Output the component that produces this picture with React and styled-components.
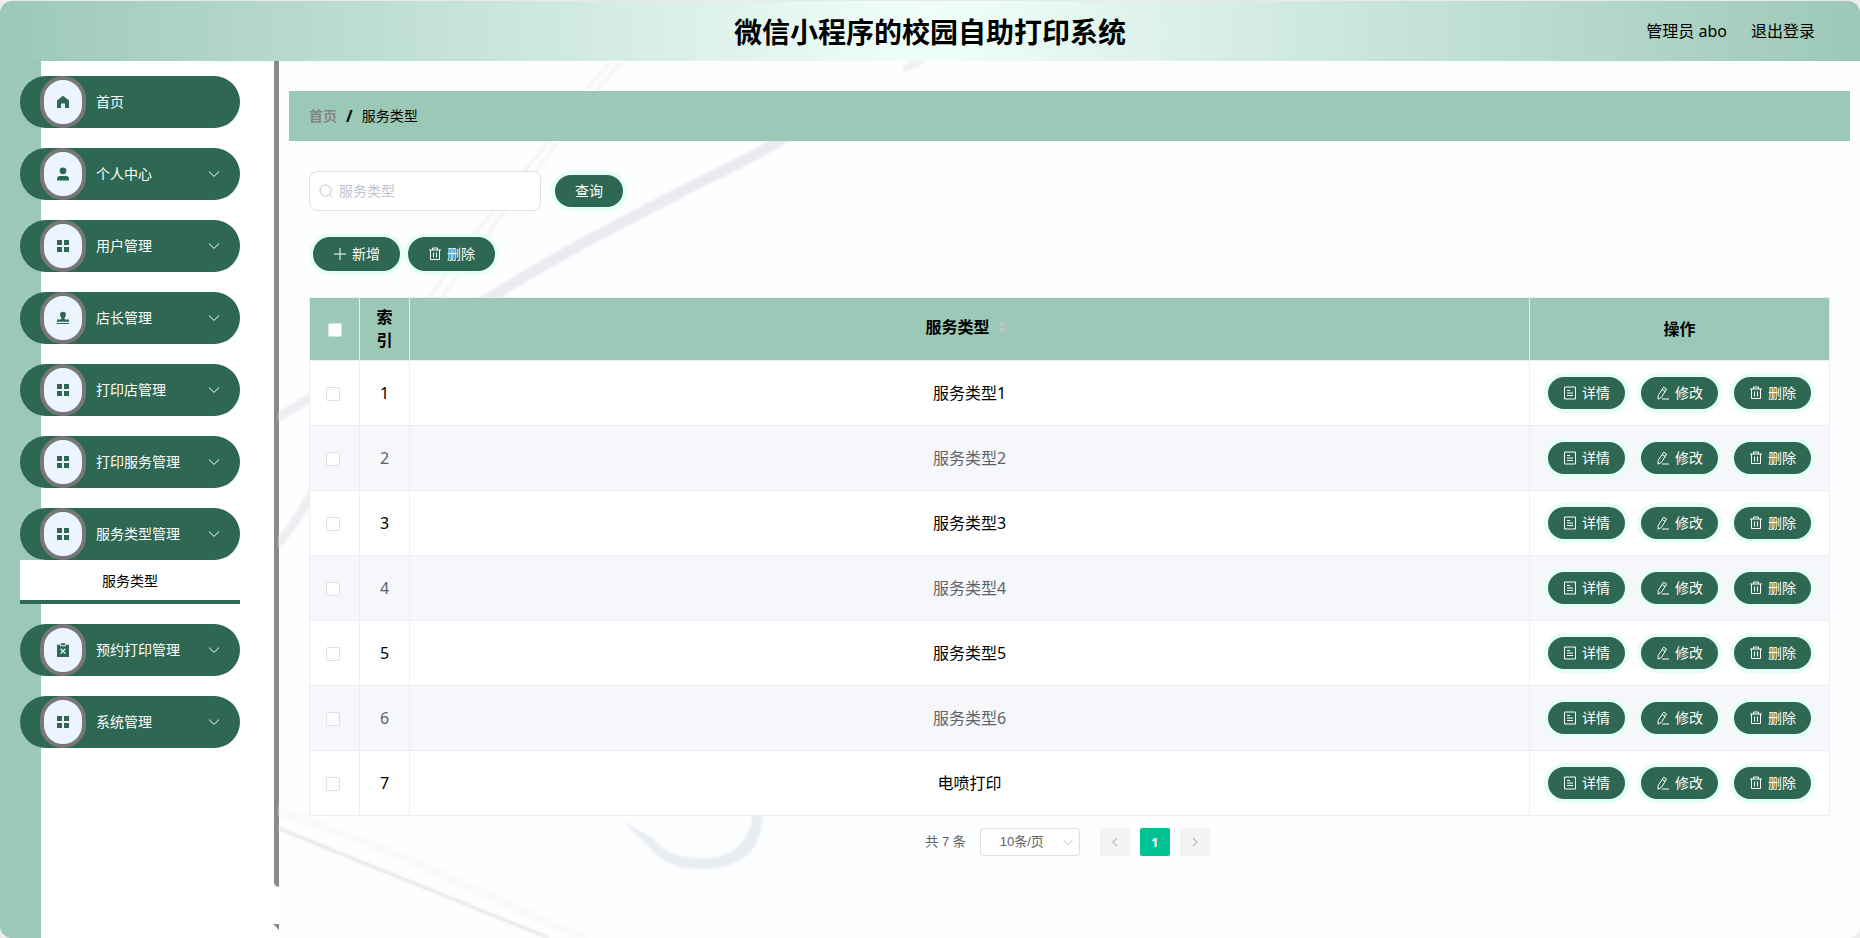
import React from 'react';
import styled, {createGlobalStyle} from 'styled-components';

const GlobalStyle = createGlobalStyle`
    :root{
        --green-dark: #2e6852;
        --green-light: #9cc8b7;
        --mint: #e6fef5;
        --border-color: #ebeef5;
        --input-border: #dcdfe6;
    }
    *{
        box-sizing: border-box;
        margin: 0;
        padding: 0;
    }
    body{
        background-color: #eeeeee;
        color: #000;
        font-family: 'Noto Sans', 'Noto Sans CJK SC', sans-serif;
        font-size: 14px;
        line-height: 20px;
    }
    a{
        color: inherit;
        text-decoration: none;
    }
    button, input, select{
        font-family: inherit;
        font-size: inherit;
        line-height: inherit;
    }
    button{
        border: none;
        cursor: pointer;
    }
`;

const Icon = ({size = 14, children}) => (
    <svg width={size} height={size} viewBox="0 0 14 14" fill="none" stroke="currentColor" strokeWidth="1" aria-hidden="true">
        {children}
    </svg>
)

const HomeIcon = () => (
    <Icon>
        <path d="M7 .8 1 5.6V13h4V8.6h4V13h4V5.6z" fill="currentColor" stroke="none" />
    </Icon>
)

const UserIcon = () => (
    <Icon>
        <g fill="currentColor" stroke="none">
            <circle cx="7" cy="3.8" r="3.4" />
            <path d="M1 13.6V12a3 3 0 0 1 3-3h6a3 3 0 0 1 3 3v1.6z" />
        </g>
    </Icon>
)

const MenuIcon = () => (
    <Icon>
        <path d="M1 1h5v5H1zM8 1h5v5H8zM1 8h5v5H1zM8 8h5v5H8z" fill="currentColor" stroke="none" />
    </Icon>
)

const StampIcon = () => (
    <Icon>
        <path d="M7 .8a3 3 0 0 1 3 3c0 1.600-1.400 2.400-1.400 3.800 0 .8.600 1 1.400 1h3v2.200H1V8.600h3c.8 0 1.400-.2 1.400-1C5.400 6.200 4 5.400 4 3.800a3 3 0 0 1 3-3zM1 12h12v1H1z" fill="currentColor" stroke="none" />
    </Icon>
)

const ClipboardIcon = () => (
    <Icon>
        <path d="M1 1.800h3v1.400h6V1.800h3V14H1zM4.800.2h4.400v2H4.800z" fill="currentColor" stroke="none" />
        <path d="m4.600 5.800 4.800 4.800m0-4.800-4.800 4.800" stroke="#ecf5ff" strokeWidth="1.300" />
    </Icon>
)

const ChevronIcon = () => (
    <Icon>
        <path d="m2 4.600 5 4.800 5-4.800" />
    </Icon>
)

const SearchIcon = () => (
    <Icon>
        <circle cx="6.600" cy="6.600" r="5.600" />
        <path d="m10.600 10.600 2.600 2.600" />
    </Icon>
)

const PlusIcon = () => (
    <Icon>
        <path d="M7 1v12M1 7h12" />
    </Icon>
)

const TrashIcon = () => (
    <Icon>
        <path d="M1 3h12M4.500 3V1h5v2M2.500 3v9.500h9V3M5.500 5.500v5M8.500 5.500v5" />
    </Icon>
)

const DetailIcon = () => (
    <Icon>
        <path d="M1.500 1h11v12h-11zM4 4.500h3M4 7h6M4 9.500h6" />
    </Icon>
)

const EditIcon = () => (
    <Icon>
        <path d="m7.600 1.200 3 1.800-5.200 8.400-3.400 1.800.200-3.800zM6.200 3.600l3 1.800M6 13h7" />
    </Icon>
)

const ArrowIcon = ({d}) => (
    <svg width="12" height="12" viewBox="0 0 12 12" fill="none" stroke="currentColor" strokeWidth="1.600" aria-hidden="true">
        <path d={d} />
    </svg>
)

const SortIcon = () => (
    <svg width="8" height="12" viewBox="0 0 8 12" fill="#c0c4cc" aria-hidden="true">
        <path d="M4 0 8 5H0zM4 12l4-5H0z" />
    </svg>
)

const menus = [
    {name: '首页', icon: <HomeIcon />, leaf: true},
    {name: '个人中心', icon: <UserIcon />},
    {name: '用户管理', icon: <MenuIcon />},
    {name: '店长管理', icon: <StampIcon />},
    {name: '打印店管理', icon: <MenuIcon />},
    {name: '打印服务管理', icon: <MenuIcon />},
    {name: '服务类型管理', icon: <MenuIcon />, child: '服务类型'},
    {name: '预约打印管理', icon: <ClipboardIcon />},
    {name: '系统管理', icon: <MenuIcon />},
]

const rows = ['服务类型1', '服务类型2', '服务类型3', '服务类型4', '服务类型5', '服务类型6', '电喷打印']

function Sidebar() {
    return (
        <SidebarStyled>
            <MenuList>
                {menus.map((item) => (
                    <li key={item.name}>
                        <MenuButton type="button">
                            <MenuBadge>{item.icon}</MenuBadge>
                            <span>{item.name}</span>
                            {!item.leaf && <MenuArrow><ChevronIcon /></MenuArrow>}
                        </MenuButton>
                        {item.child && <SubMenuLink href="#type">{item.child}</SubMenuLink>}
                    </li>
                ))}
            </MenuList>
            <ScrollTrack>
                <ScrollThumb />
                <ScrollCorner />
            </ScrollTrack>
        </SidebarStyled>
    )
}

function Backdrop() {
    return (
        <BackdropStyled viewBox="0 0 1581 877" preserveAspectRatio="none" fill="none" aria-hidden="true">
            <path d="M201 243C270 198 350 158 400 132S490 90 530 60" stroke="#e9ebf0" strokeWidth="11" />
            <path d="M624 8 650-4" stroke="#eff0f3" strokeWidth="7" />
            <path d="M-4 358 40 332" stroke="#eceef2" strokeWidth="9" />
            <path d="M-4 486Q18 462 40 420" stroke="#eceef2" strokeWidth="9" />
            <path d="M150 236 200 168 270 80M160 240 212 168 280 80M306 30 336-4M314 34 346-4" stroke="#f5f5f6" strokeWidth="4" />
            <path d="M-4 766 80 800 270 877" stroke="#e6e6e8" strokeWidth="3" />
            <path d="M-4 748 110 790 310 880" stroke="#f8f9fb" strokeWidth="9" />
            <path d="M343 760 372 788C384 803 402 808 424 808C462 808 484 790 484 750H473C473 780 455 797 424 797C400 797 386 792 374 777Z" fill="#e9edf1" />
        </BackdropStyled>
    )
}

function ServiceTable() {
    return (
        <TableStyled>
            <colgroup>
                <col className="narrow" />
                <col className="narrow" />
                <col />
                <col className="actions" />
            </colgroup>
            <thead>
                <tr>
                    <th><Checkbox type="checkbox" aria-label="全选" /></th>
                    <th>索引</th>
                    <th><SortButton type="button">服务类型<SortIcon /></SortButton></th>
                    <th>操作</th>
                </tr>
            </thead>
            <tbody>
                {rows.map((name, index) => (
                    <tr key={name}>
                        <td className="check"><Checkbox type="checkbox" aria-label={name} /></td>
                        <td>{index + 1}</td>
                        <td>{name}</td>
                        <td>
                            <RowActions>
                                <PillButton type="button"><DetailIcon />详情</PillButton>
                                <PillButton type="button"><EditIcon />修改</PillButton>
                                <PillButton type="button"><TrashIcon />删除</PillButton>
                            </RowActions>
                        </td>
                    </tr>
                ))}
            </tbody>
        </TableStyled>
    )
}

function App() {
    return (
        <PageStyled>
            <GlobalStyle />
            <HeaderStyled>
                <h1>微信小程序的校园自助打印系统</h1>
                <div className="user">
                    <span>管理员 abo</span>
                    <a href="#logout">退出登录</a>
                </div>
            </HeaderStyled>
            <BodyStyled>
                <Sidebar />
                <MainStyled>
                    <Backdrop />
                    <Breadcrumb aria-label="breadcrumb">
                        <a href="#home">首页</a>
                        <b>/</b>
                        <span>服务类型</span>
                    </Breadcrumb>
                    <ContentStyled>
                        <SearchForm onSubmit={(e) => e.preventDefault()}>
                            <SearchBox>
                                <SearchIcon />
                                <input type="text" placeholder="服务类型" aria-label="服务类型" />
                            </SearchBox>
                            <PillButton type="submit" $width="76px">查询</PillButton>
                        </SearchForm>
                        <Toolbar>
                            <PillButton type="button" $width="95px" $height="42px"><PlusIcon />新增</PillButton>
                            <PillButton type="button" $width="95px" $height="42px"><TrashIcon />删除</PillButton>
                        </Toolbar>
                        <ServiceTable />
                        <Pagination>
                            <span>共 7 条</span>
                            <PageSize>
                                <select aria-label="每页条数" defaultValue="10">
                                    <option value="10">10条/页</option>
                                    <option value="20">20条/页</option>
                                </select>
                                <ChevronIcon />
                            </PageSize>
                            <div className="pages">
                                <PageButton type="button" aria-label="上一页"><ArrowIcon d="M8 2 4 6l4 4" /></PageButton>
                                <PageButton type="button" $active>1</PageButton>
                                <PageButton type="button" aria-label="下一页"><ArrowIcon d="m4 2 4 4-4 4" /></PageButton>
                            </div>
                        </Pagination>
                    </ContentStyled>
                </MainStyled>
            </BodyStyled>
        </PageStyled>
    )
}

const PageStyled = styled.div`
    min-height: 100vh;
    display: flex;
    flex-direction: column;
    border-top: 1px solid #e9e9e9;
    border-radius: 12px;
    overflow: hidden;
`;

const HeaderStyled = styled.header`
    height: 60px;
    padding: 0 45px 0 20px;
    display: grid;
    grid-template-columns: 1fr auto 1fr;
    align-items: center;
    border-radius: 12px 12px 0 0;
    background: radial-gradient(circle, #f2fffa 0%, var(--green-light) 100%);
    h1{
        grid-column: 2;
        padding: 2px 0 0 25px;
        font-size: 28px;
        line-height: 40px;
        font-weight: 700;
    }
    .user{
        display: flex;
        justify-content: flex-end;
        gap: 24px;
        font-size: 16px;
    }
`;

const BodyStyled = styled.div`
    flex: 1;
    display: flex;
`;

const SidebarStyled = styled.aside`
    width: 279px;
    flex-shrink: 0;
    display: flex;
    justify-content: space-between;
    padding-left: 20px;
    background: linear-gradient(to right, var(--green-light) 41px, #fff 41px);
`;

const MenuList = styled.ul`
    width: 220px;
    padding-top: 15px;
    display: flex;
    flex-direction: column;
    gap: 20px;
    list-style: none;
`;

const MenuButton = styled.button`
    width: 100%;
    height: 52px;
    padding: 0 19px 0 20px;
    display: flex;
    align-items: center;
    gap: 10px;
    border-radius: 26px;
    background-color: var(--green-dark);
    color: #fff;
`;

const MenuBadge = styled.span`
    width: 46px;
    height: 52px;
    display: flex;
    align-items: center;
    justify-content: center;
    border: 4px solid #777;
    border-radius: 23px;
    background-color: #ecf5ff;
    color: var(--green-dark);
`;

const MenuArrow = styled.span`
    display: flex;
    margin-left: auto;
`;

const SubMenuLink = styled.a`
    height: 44px;
    padding-top: 2px;
    display: flex;
    align-items: center;
    justify-content: center;
    border-bottom: 4px solid var(--green-dark);
    background-color: #fff;
`;

const ScrollTrack = styled.div`
    width: 6px;
    display: flex;
    flex-direction: column;
    justify-content: space-between;
    align-items: flex-end;
    padding-bottom: 8px;
`;

const ScrollThumb = styled.div`
    width: 5px;
    height: 95%;
    border-bottom-left-radius: 5px;
    background-color: #8a8a8a;
`;

const ScrollCorner = styled.div`
    border-top: 6px solid #8a8a8a;
    border-left: 6px solid transparent;
`;

const MainStyled = styled.main`
    flex: 1;
    min-width: 0;
    position: relative;
    padding: 30px 10px;
    background-color: #fdfeff;
`;

const BackdropStyled = styled.svg`
    position: absolute;
    inset: 0;
    width: 100%;
    height: 100%;
    filter: blur(1px);
`;

const Breadcrumb = styled.nav`
    position: relative;
    height: 50px;
    padding: 0 20px;
    display: flex;
    align-items: center;
    gap: 9px;
    background-color: var(--green-light);
    a{
        color: #858585;
        font-weight: 700;
    }
    b{
        font-size: 16px;
    }
`;

const ContentStyled = styled.div`
    position: relative;
    padding: 30px 20px;
`;

const SearchForm = styled.form`
    display: flex;
    gap: 10px;
`;

const SearchBox = styled.label`
    width: 232px;
    height: 40px;
    padding: 0 9px;
    display: flex;
    align-items: center;
    gap: 6px;
    border: 1px solid var(--input-border);
    border-radius: 8px;
    background-color: #fff;
    color: #c0c4cc;
    input{
        flex: 1;
        min-width: 0;
        border: none;
        outline: none;
        background: transparent;
        color: #606266;
    }
    input::placeholder{
        color: #c0c4cc;
    }
`;

const PillButton = styled.button`
    width: ${props => props.$width || '85px'};
    height: ${props => props.$height || '40px'};
    display: inline-flex;
    align-items: center;
    justify-content: center;
    gap: 5px;
    border: 4px solid var(--mint);
    border-radius: 21px;
    background-color: var(--green-dark);
    color: #fff;
    font-size: 14px;
    line-height: 20px;
`;

const Toolbar = styled.div`
    display: flex;
    margin: 22px 0;
`;

const TableStyled = styled.table`
    width: 100%;
    table-layout: fixed;
    border-collapse: separate;
    border-spacing: 0;
    border-top: 1px solid var(--border-color);
    border-left: 1px solid var(--border-color);
    background-color: #fff;
    font-size: 16px;
    line-height: 23px;
    text-align: center;
    .narrow{
        width: 50px;
    }
    .actions{
        width: 300px;
    }
    th, td{
        border-right: 1px solid var(--border-color);
        border-bottom: 1px solid var(--border-color);
        vertical-align: middle;
    }
    th{
        height: 63px;
        padding: 0 16px;
        background-color: var(--green-light);
        font-weight: 700;
    }
    td{
        height: 65px;
    }
    .check{
        padding-right: 4px;
    }
    tbody tr:nth-child(even){
        background-color: #f5f7fa;
        color: #606266;
    }
`;

const SortButton = styled.button`
    display: inline-flex;
    align-items: center;
    gap: 8px;
    padding: 0 8px 4px 0;
    background: transparent;
    font-weight: 700;
    color: inherit;
`;

const Checkbox = styled.input`
    appearance: none;
    width: 14px;
    height: 14px;
    border: 1px solid var(--input-border);
    border-radius: 2px;
    background-color: #fff;
    vertical-align: middle;
`;

const RowActions = styled.div`
    display: flex;
    justify-content: center;
    gap: 8px;
`;

const Pagination = styled.div`
    display: flex;
    align-items: center;
    justify-content: center;
    padding: 12px 4px 0 0;
    color: #606266;
    font-size: 13px;
    font-family: 'Liberation Sans', 'Noto Sans CJK SC', sans-serif;
    .pages{
        display: flex;
        gap: 10px;
    }
`;

const PageSize = styled.div`
    width: 100px;
    height: 28px;
    margin: 0 20px 0 14px;
    padding-right: 4px;
    display: flex;
    align-items: center;
    border: 1px solid var(--input-border);
    border-radius: 3px;
    background-color: #fff;
    color: #c0c4cc;
    select{
        flex: 1;
        min-width: 0;
        height: 26px;
        padding-left: 19px;
        appearance: none;
        border: none;
        outline: none;
        background: transparent;
        color: #606266;
    }
`;

const PageButton = styled.button`
    width: 30px;
    height: 28px;
    display: flex;
    align-items: center;
    justify-content: center;
    border-radius: 2px;
    background-color: ${props => props.$active ? '#00c292' : '#f4f4f5'};
    color: ${props => props.$active ? '#fff' : '#c0c4cc'};
    font-family: 'Noto Sans', sans-serif;
    font-weight: 700;
`;

export default App
